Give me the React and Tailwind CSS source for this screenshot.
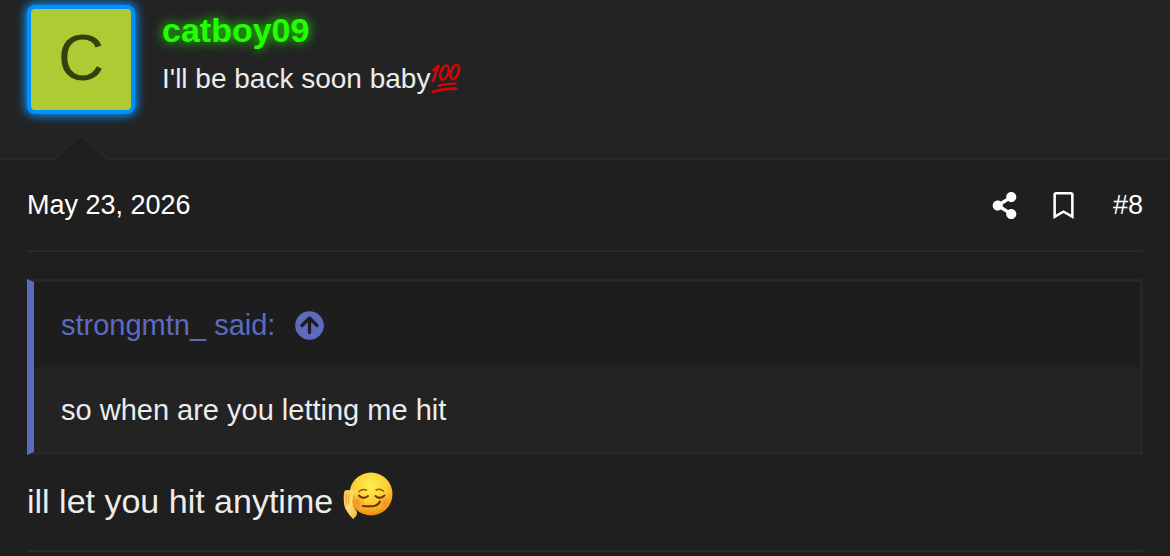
import { FaShareAlt, FaRegBookmark } from "react-icons/fa";

function HundredEmoji() {
  return (
    <svg viewBox="0 0 32 32" className="h-8 w-8 shrink-0" fill="none" stroke="#cf0808" strokeLinecap="round" role="img" aria-label="100">
      <path d="M3.5 7Q6.5 5.5 8.5 2.8Q6 10 3 18" strokeWidth="2.8" strokeLinejoin="round" />
      <ellipse cx="14.5" cy="9.6" rx="3.7" ry="7.4" transform="rotate(20 14.5 9.6)" strokeWidth="2.6" />
      <ellipse cx="24.8" cy="9" rx="3.7" ry="7.4" transform="rotate(20 24.8 9)" strokeWidth="2.6" />
      <path d="M8.5 22.8C13 21.5 19 20.7 25.5 20.6" strokeWidth="2.4" />
      <path d="M3 29C10 26.8 17 25.7 26.5 25.7" strokeWidth="2.7" />
    </svg>
  );
}

function SmirkEmoji() {
  return (
    <svg viewBox="0 0 50 50" className="h-[50px] w-[50px] shrink-0" fill="none" role="img" aria-label="smiling face resting on hand">
      <defs>
        <radialGradient id="face" cx="0.48" cy="0.3" r="0.72">
          <stop offset="0" stopColor="#fff04f" />
          <stop offset="0.55" stopColor="#fdce33" />
          <stop offset="0.85" stopColor="#f5a01d" />
          <stop offset="1" stopColor="#e67f13" />
        </radialGradient>
        <radialGradient id="blush">
          <stop offset="0" stopColor="#f5762a" stopOpacity="0.6" />
          <stop offset="1" stopColor="#f5762a" stopOpacity="0" />
        </radialGradient>
        <linearGradient id="hand" x1="0" y1="0" x2="1" y2="1">
          <stop offset="0" stopColor="#f6bd45" />
          <stop offset="0.5" stopColor="#ffdf70" />
          <stop offset="1" stopColor="#f0b43c" />
        </linearGradient>
      </defs>
      <circle cx="28" cy="23" r="21.5" fill="url(#face)" />
      <circle cx="15" cy="31" r="7" fill="url(#blush)" />
      <circle cx="42" cy="31" r="6" fill="url(#blush)" />
      <g stroke="#68380b" strokeLinecap="round">
        <path d="M16 20.5Q19 17.5 23.5 19M33 19Q37 17 40.5 20" stroke="#96570f" strokeWidth="1.5" />
        <path d="M16 24.5Q20 29 25 25M32.5 25Q37 29 41.5 24.5" strokeWidth="2" />
        <path d="M20 35Q27 36 32 34.8Q36 33.5 36.8 30.5" strokeWidth="2.2" />
      </g>
      <path d="M1 22Q1 19 4 19L13 19.5Q16 20.5 12 22L10 24Q11 27 9.5 30Q9.5 33 11 36L14 41Q14.5 45 10 48Q5 43 2 37Q0 31 1 22Z" fill="url(#hand)" />
      <path d="M3 23 3.5 33M6 24Q5 29 6 33M10.5 25Q9 31 11 36" stroke="#dc9430" strokeWidth="0.8" strokeLinecap="round" />
    </svg>
  );
}

function ArrowUpCircle() {
  return (
    <svg viewBox="0 0 29 29" className="h-[29px] w-[29px]" fill="none" aria-hidden="true">
      <circle cx="14.5" cy="14.5" r="14.3" fill="#5c6bc0" />
      <path d="M7 14.5 14.5 7 22 14.5M14.5 7.5V21.5" stroke="#1d1d1d" strokeWidth="3.3" strokeLinecap="round" strokeLinejoin="round" />
    </svg>
  );
}

export default function App() {
  return (
    <article className="min-h-screen bg-[#1f1f1f] text-[#ececec] font-['Liberation_Sans',Arial,sans-serif]">
      <header className="relative flex h-40 items-start gap-[27px] border-b-2 border-[#292929] bg-[#232323] px-[27px] pt-[5px]">
        <a
          href="#profile"
          className="flex h-[109px] w-[108px] shrink-0 items-center justify-center rounded-lg border-4 border-[#0091ff] bg-[#adcc33] pb-1 text-[64px] leading-none text-[#36400f] shadow-[0_0_10px_2px_#0091ff]"
        >
          C
        </a>
        <div className="pt-[3px]">
          <h4 className="text-[34px] leading-[44px] font-bold text-[#22ff00] [text-shadow:0_0_12px_#22ff00]">
            <a href="#profile">catboy09</a>
          </h4>
          <div className="flex items-center pt-[9px] text-[28px] leading-9">
            I'll be back soon baby
            <HundredEmoji />
          </div>
        </div>
        <svg viewBox="0 0 52 26" className="absolute -bottom-[2px] left-[55px] h-[26px] w-[52px]">
          <path d="M0 26 26 0 52 26Z" fill="#1f1f1f" />
          <path d="M0 25 26 1 52 25" fill="none" stroke="#292929" strokeWidth="1.5" />
        </svg>
      </header>

      <div className="px-[27px]">
        <div className="flex h-[92px] items-center justify-between border-b-2 border-[#292929] text-[27px] leading-9 text-white">
          <a href="#post"><time dateTime="2026-05-23">May 23, 2026</time></a>
          <div className="flex items-center gap-9">
            <div className="flex items-center gap-8">
              <button type="button" aria-label="Share"><FaShareAlt size={27} /></button>
              <button type="button" aria-label="Add bookmark"><FaRegBookmark size={27} /></button>
            </div>
            <a href="#post">#8</a>
          </div>
        </div>

        <blockquote className="mt-[27px] border-3 border-l-[7px] border-[#272727] border-l-[#5c6bc0] text-[29px] leading-9">
          <a href="#quote" className="flex items-center gap-5 bg-[#1d1d1d] px-[27px] pt-[25px] pb-6 text-[#5c6bc0]">
            strongmtn_ said:
            <ArrowUpCircle />
          </a>
          <div className="bg-[#232323] px-[27px] pt-[25px] pb-6 text-[#ececec]">so when are you letting me hit</div>
        </blockquote>

        <div className="flex h-[97px] items-start gap-[10px] border-b-2 border-[#292929] pt-4 text-[34px] leading-[60px]">
          ill let you hit anytime
          <SmirkEmoji />
        </div>
      </div>
    </article>
  );
}
